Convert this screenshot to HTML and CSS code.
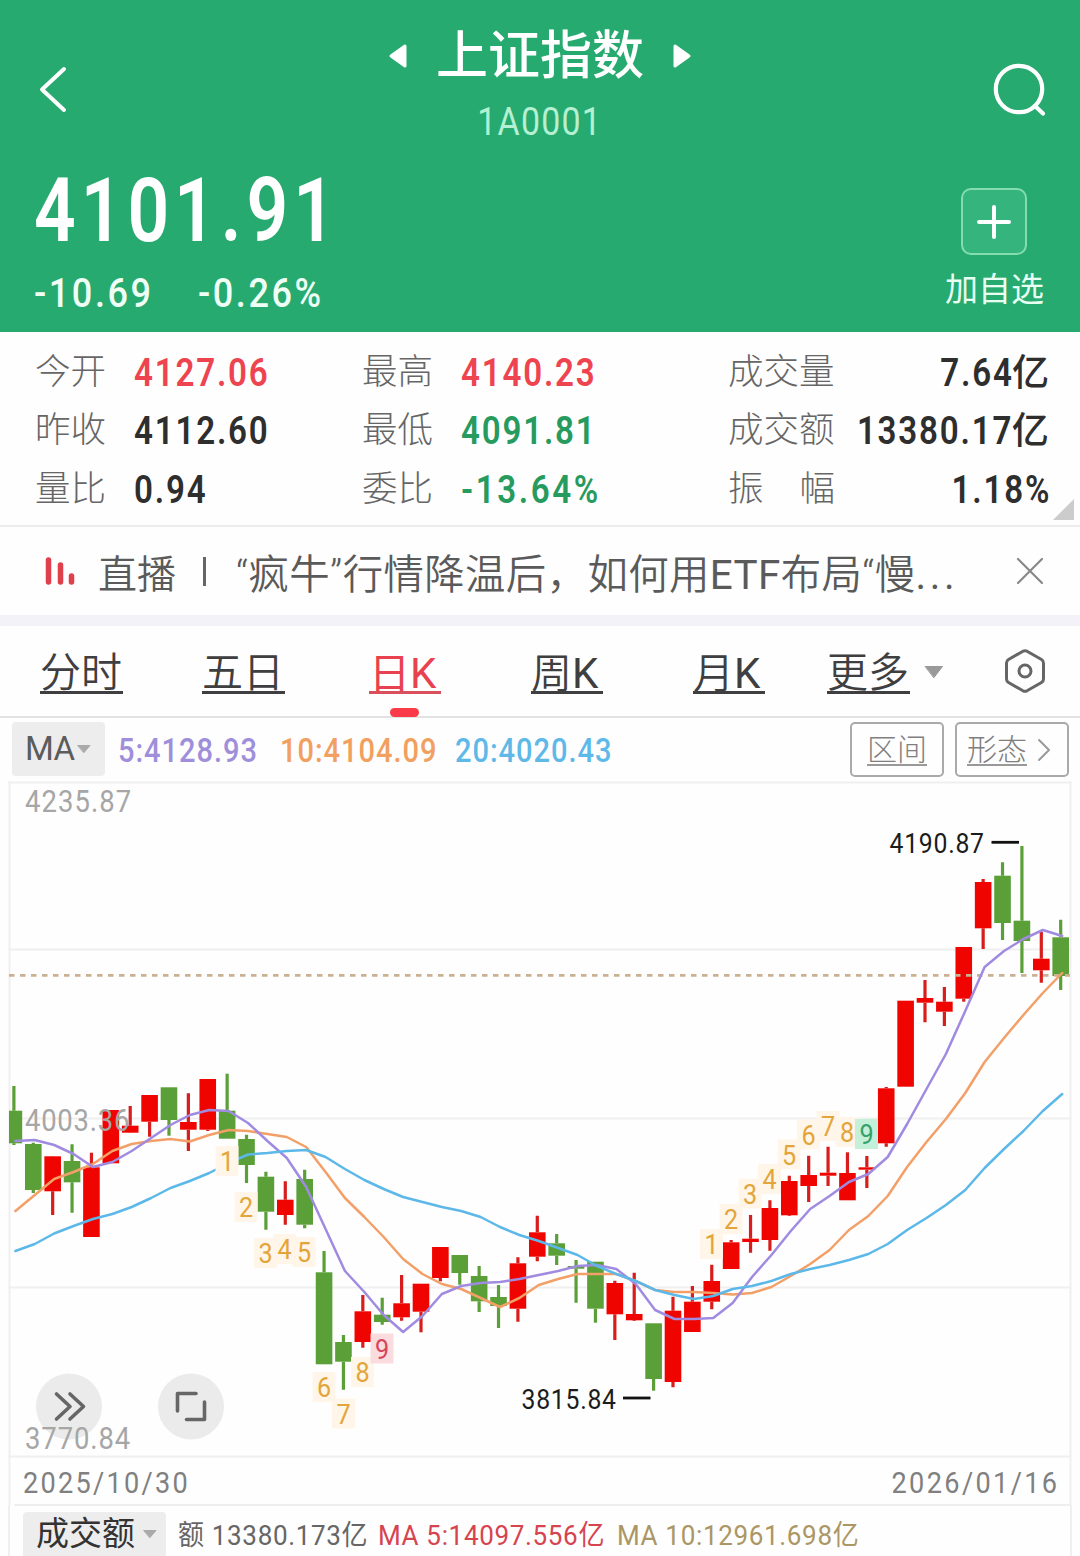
FILE: index.html
```html
<!DOCTYPE html>
<html lang="zh-CN">
<head>
    <meta charset="UTF-8">
    <meta name="viewport" content="width=device-width, initial-scale=1.0">
    <title>上证指数 1A0001</title>
    <link rel="stylesheet" href="styles.css">
</head>
<body>
    <header class="header">
        <div class="nav">
            <svg class="back" width="30" height="50" viewBox="0 0 30 50"><path d="M26 5L4 25.500L26 46"/></svg>
            <div class="title">
                <div class="name">
                    <svg width="18" height="24" viewBox="0 0 18 24"><path d="M2 12L16 2V22Z"/></svg>
                    <h1>上证指数</h1>
                    <svg width="18" height="24" viewBox="0 0 18 24"><path d="M16 12L2 2V22Z"/></svg>
                </div>
                <div class="code">1A0001</div>
            </div>
            <svg class="search" width="56" height="56" viewBox="0 0 56 56"><circle cx="27" cy="27" r="23.200"/><path d="M43 44L51 51.500"/></svg>
        </div>
        <div class="quote">
            <div>
                <div class="price">4101.91</div>
                <div class="change"><span>-10.69</span><span>-0.26%</span></div>
            </div>
            <div class="add">
                <div class="add-icon"><svg width="36" height="36" viewBox="0 0 36 36"><path d="M18 3V33M3 18H33"/></svg></div>
                <div class="add-text">加自选</div>
            </div>
        </div>
    </header>

    <section class="stats">
        <div class="label">今开</div><div class="value red">4127.06</div>
        <div class="label">最高</div><div class="value red">4140.23</div>
        <div class="label">成交量</div><div class="value last">7.64<b>亿</b></div>
        <div class="label">昨收</div><div class="value">4112.60</div>
        <div class="label">最低</div><div class="value green">4091.81</div>
        <div class="label">成交额</div><div class="value last">13380.17<b>亿</b></div>
        <div class="label">量比</div><div class="value">0.94</div>
        <div class="label">委比</div><div class="value green ratio">-13.64%</div>
        <div class="label spread"><span>振</span><span>幅</span></div><div class="value last percent">1.18%</div>
        <div class="corner"></div>
    </section>

    <section class="news">
        <svg class="live" width="30" height="28" viewBox="0 0 30 28"><path d="M3.500 3V25M15.500 8V25M26.500 19V25"/></svg>
        <span class="news-tag">直播</span>
        <i class="bar"></i>
        <p>“疯牛”行情降温后，如何用<span class="etf">ETF</span>布局“慢<span class="dots">...</span></p>
        <svg class="close" width="28" height="28" viewBox="0 0 28 28"><path d="M2 2L26 26M26 2L2 26"/></svg>
    </section>

    <nav class="tabs">
        <a class="tab">分时</a>
        <a class="tab">五日</a>
        <a class="tab active">日<span>K</span></a>
        <a class="tab">周<span>K</span></a>
        <a class="tab">月<span>K</span></a>
        <a class="tab">更多</a>
        <svg class="more" width="20" height="14" viewBox="0 0 20 14"><path d="M1.500 1.500H18.500L10 12.500Z"/></svg>
        <svg class="setting" width="44" height="46" viewBox="0 0 44 46"><path d="M20 3.200Q22 2.200 24 3.200L38.500 11.500Q40.500 12.700 40.500 15V31Q40.500 33.300 38.500 34.500L24 42.800Q22 43.800 20 42.800L5.500 34.500Q3.500 33.300 3.500 31V15Q3.500 12.700 5.500 11.500Z"/><circle cx="22" cy="23" r="6"/></svg>
    </nav>

    <section class="ma">
        <div class="ma-select">MA<svg width="14" height="8" viewBox="0 0 14 8"><path d="M1 .5H13L7 7.500Z"/></svg></div>
        <div class="ma-item ma5"><span>5:4128.93</span></div>
        <div class="ma-item ma10"><span>10:4104.09</span></div>
        <div class="ma-item ma20"><span>20:4020.43</span></div>
        <div class="btn range"><u>区间</u></div>
        <div class="btn shape"><u>形态</u><svg width="14" height="24" viewBox="0 0 14 24"><path d="M2 2L12 12L2 22"/></svg></div>
    </section>

    <svg id="chart" width="1080" height="725" viewBox="0 781 1080 725">
        <g class="grid">
            <path d="M9 782.500H1070.500M9 949.500H1070.500M9 1118.500H1070.500M9 1287.500H1070.500M9 1456.500H1070.500M15 1505H1070.500"/>
            <path d="M9.500 782V1506M1070.500 782V1506"/>
        </g>
        <g id="candles"></g>
        <path class="now" d="M9 975.300H1070"/>
        <g id="lines"></g>
        <g id="marks"></g>
        <g class="peak">
            <text transform="translate(889.500 853) scale(.9 1)" textLength="105">4190.87</text>
            <path d="M991.500 842.300H1019"/>
            <text transform="translate(521.500 1409) scale(.9 1)" textLength="105">3815.84</text>
            <path d="M623 1398H650.500"/>
        </g>
        <g class="tools">
            <circle cx="69" cy="1406.500" r="33"/>
            <path d="M56.500 1394L70 1406.500L56.500 1419M70 1394L83.500 1406.500L70 1419"/>
            <circle cx="191" cy="1406.500" r="33"/>
            <path d="M177.500 1411V1393.500H196M204.500 1402V1419.500H186.500"/>
        </g>
        <g class="axis">
            <text transform="translate(25 812) scale(.9 1)" textLength="118">4235.87</text>
            <text transform="translate(25 1130.500) scale(.9 1)" textLength="116">4003.36</text>
            <text transform="translate(25 1448.500) scale(.9 1)" textLength="117">3770.84</text>
        </g>
        <g class="dates">
            <text transform="translate(23 1493) scale(.92 1)" textLength="179">2025/10/30</text>
            <text transform="translate(891.500 1493) scale(.92 1)" textLength="180">2026/01/16</text>
        </g>
    </svg>

    <section class="volume">
        <div class="vol-select">成交额<svg width="14" height="8" viewBox="0 0 14 8"><path d="M1 .5H13L7 7.500Z"/></svg></div>
        <div class="vol-item v0"><span>额 13380.173亿</span></div>
        <div class="vol-item v5"><span>MA 5:14097.556亿</span></div>
        <div class="vol-item v10"><span>MA 10:12961.698亿</span></div>
    </section>

    <script>
        const X0 = 13.9, STEP = 19.385;
        // [up, high, body top, body bottom, low]
        const candles = [
            [0,1086,1110.7,1143.3,1145],[0,1142.7,1144,1190,1193],[1,1156,1156.3,1191.3,1215],
            [0,1144.3,1161,1182.3,1212.7],[1,1152.7,1167.3,1237,1237],[1,1110,1110,1163.3,1163.3],
            [1,1106,1125.7,1132.7,1133],[1,1095,1095,1121.7,1136.7],[0,1087.3,1087.3,1120,1135.7],
            [1,1093.3,1122,1129.7,1151],[1,1079,1079,1129.7,1131],[0,1073.7,1110.7,1138.7,1138.7],
            [0,1134.7,1139,1165,1183],[0,1171.7,1176.7,1211.7,1229.7],[1,1181.3,1199.7,1215,1224.7],
            [0,1169.7,1179,1224.7,1228.3],[0,1251,1272.3,1364.3,1364.3],[0,1335,1342,1361.7,1389.7],
            [1,1295,1311.3,1342,1347.7],[0,1297.7,1314.7,1322,1324.7],[1,1275,1303.3,1317.3,1320.7],
            [1,1283.7,1283.7,1311.7,1332.3],[1,1247,1247,1278,1281.3],[0,1255,1255,1273,1284.7],
            [0,1266,1276,1301.3,1312],[0,1285,1297,1306,1328],[1,1257.3,1263.3,1308.7,1321.7],
            [1,1215.7,1232.3,1256.7,1261.3],[0,1234,1243.3,1255.7,1265],[0,1260,1266,1268.7,1302.7],
            [0,1261.7,1261.7,1308.7,1322.7],[1,1280.7,1283,1314.3,1340],[1,1272.7,1314,1320.3,1321],
            [0,1323.3,1323.3,1379,1390.7],[1,1296.7,1310.7,1382,1387.3],[1,1286,1301.7,1332,1332],
            [1,1264.7,1281,1301.7,1309.3],[1,1240,1242.3,1269,1269],[1,1215,1238.7,1242,1252.7],
            [1,1200.3,1208,1240,1250.7],[1,1175.7,1181,1215.3,1216],[1,1155.7,1175,1186,1202],
            [1,1146.7,1172.7,1175.7,1186],[1,1152.3,1173,1200.3,1200.3],[1,1156,1167.3,1169.7,1188],
            [1,1087,1088.3,1143.3,1146.7],[1,1000.7,1000.7,1086.7,1086.7],[1,980,998,1002.7,1022.3],
            [1,987,1001.7,1011.7,1026],[1,947,947,998.7,1001.7],[1,879,882,928.3,949],
            [0,862.3,875.7,923,940],[0,846,920.7,941,973],[1,931.7,958.7,970.3,982.7],
            [0,919.7,937.3,976,990]
        ];
        const lines = {
            ma10: [1211,1195,1179,1172,1164,1151,1144,1141,1139,1141.5,1135,1130,1131,1134,1137,1147,1172,1198,1217,1237,1259,1274,1284,1289,1298,1307,1298,1285,1279,1274,1274,1274,1281,1290,1292,1292,1293,1294.5,1293,1287,1276,1264,1250,1230,1216,1196,1167,1142,1119,1093,1062,1038,1015,993,973],
            ma5: [1141,1140,1145,1154,1167,1162,1151,1138,1125,1115,1110,1111,1123,1141,1158,1187,1229,1271,1292,1315,1332,1316,1294,1286,1283,1282,1279,1275,1271,1266,1265,1269,1284,1310,1319,1319,1318,1303,1277,1255,1231,1209,1196,1182,1174,1157,1124,1089,1054,1011,967,951,939,930,936],
            ma20: [1251,1244,1233.5,1226,1219,1214,1207,1198,1188,1181,1173,1163,1154.5,1153,1151,1150,1157,1169,1180,1189,1197,1202,1207,1211,1217,1227,1235,1241,1248,1255,1266,1274,1281,1290,1295,1299,1296,1289,1286,1281,1274,1269,1265,1260,1254,1244,1230,1218,1205,1190,1168,1149,1131,1111,1094]
        };
        // [text, x, y, class]
        const marks = [
            [1,227,1161],[2,246,1207],[3,265.5,1253],[4,284.5,1249],[5,304,1252],[6,324,1387],[7,343.5,1413.5],[8,362.5,1372],[9,382,1348.5,'buy'],
            [1,711.5,1244],[2,731,1219],[3,750,1193.5],[4,769.5,1179],[5,789,1154.5],[6,808.5,1134.5],[7,828,1126],[8,847,1132],[9,866.5,1134,'sell']
        ];

        document.getElementById('candles').innerHTML = candles.map(([up, high, top, bottom, low], i) => {
            const x = X0 + STEP * i;
            const left = Math.max(x - 8.3, 9);
            return `<g class="${up ? 'up' : 'down'}">` +
                `<rect class="body" x="${left}" y="${top}" width="${x + 8.3 - left}" height="${bottom - top}"/>` +
                `<path d="M${x} ${high}V${top}M${x} ${bottom}V${low}"/></g>`;
        }).join('');

        document.getElementById('lines').innerHTML = Object.keys(lines).map(key =>
            `<polyline class="${key}-line" points="${lines[key].map((y, i) => (X0 + 1.5 + STEP * i) + ',' + y).join(' ')}"/>`
        ).join('');

        document.getElementById('marks').innerHTML = marks.map(([n, x, y, type]) =>
            `<g class="mark ${type || ''}"><rect x="${x - 11.5}" y="${y - 15}" width="23" height="30"/><text transform="translate(${x} ${y + 10}) scale(.9 1)">${n}</text></g>`
        ).join('');
    </script>
</body>
</html>
```
FILE: styles.css
```css
* { box-sizing: border-box; }
body {
    margin: 0;
    width: 1080px;
    height: 1556px;
    overflow: hidden;
    background: #fefefe;
    font-family: Roboto, "Noto Sans CJK SC", sans-serif;
    color: #2e2e2e;
}
svg { display: block; flex: none; fill: none; stroke-linecap: round; stroke-linejoin: round; }

/* header */
.header { height: 332px; background: #27aa6f; color: #fff; }
.nav { height: 164px; display: flex; justify-content: space-between; padding: 0 32px 0 38px; }
.back { margin-top: 64px; stroke: #fff; stroke-width: 4; }
.search { margin-top: 62px; stroke: #fff; stroke-width: 4.2; }
.title { display: flex; flex-direction: column; align-items: center; margin-left: 20px; }
.name { display: flex; align-items: center; gap: 29px; height: 74px; margin-top: 19px; }
.name svg { fill: #fff; stroke: #fff; stroke-width: 3; }
.name h1 { margin: 3px 0 1px; font-size: 52px; font-weight: 500; line-height: 74px; }
.code { font-size: 39px; line-height: 46px; margin-top: 6px; letter-spacing: 1.4px; color: #b4f0d1; transform: scaleX(.87); }
.quote { display: flex; justify-content: space-between; padding: 0 36px 0 34px; }
.price { width: 300px; font-size: 89px; font-weight: 600; line-height: 100px; letter-spacing: 6.1px; margin-top: -3px; transform: scaleX(.82); transform-origin: left; }
.change { display: flex; font-size: 41px; font-weight: 500; line-height: 48px; margin-top: 8px; letter-spacing: 2.9px; color: #effff6; }
.change span { width: 164px; transform: scaleX(.88); transform-origin: left; }
.add { display: flex; flex-direction: column; align-items: center; margin-top: 24px; }
.add-icon { width: 66px; height: 67px; display: flex; align-items: center; justify-content: center; margin-right: 2px; border: 2px solid #84dcb0; border-radius: 10px; background: #35b57d; }
.add-icon svg { stroke: #fff; stroke-width: 4; }
.add-text { font-size: 33px; line-height: 48px; margin-top: 11px; color: #e6fff2; }

/* quote numbers */
.stats {
    position: relative;
    height: 195px;
    padding: 11px 31px 0 35px;
    display: grid;
    grid-template-columns: 99px 228px 99px 267px 110px minmax(0, 1fr);
    grid-auto-rows: 58.3px;
    border-bottom: 2px solid #ececec;
}
.label { font-size: 35.5px; font-weight: 300; line-height: 58px; color: #666; }
.spread { display: flex; justify-content: space-between; width: 107px; }
.value { font-size: 39px; font-weight: 600; line-height: 61px; letter-spacing: 2.1px; white-space: nowrap; transform: scaleX(.85); transform-origin: left; }
.ratio { letter-spacing: 3px; }
.last { justify-self: end; transform-origin: right; }
.percent { margin-right: -2px; }
.value b { display: inline-block; margin-left: 5px; font-size: 37px; font-weight: 500; line-height: 40px; letter-spacing: 0; transform: scaleX(1.18); transform-origin: right; }
.red { color: #ee4450; }
.green { color: #279a5e; }
.corner { position: absolute; right: 6px; bottom: 5px; border-left: 21px solid transparent; border-bottom: 21px solid #ccc; }

/* news */
.news { height: 99px; display: flex; align-items: center; padding: 0 36px 11px 45px; font-size: 40.4px; font-weight: 350; color: #5a5a5a; box-shadow: inset 0 -11px #f2f2f8; }
.live { stroke: #e0404c; stroke-width: 5.5; }
.news-tag { margin-left: 23px; font-size: 39px; }
.bar { width: 3px; height: 29px; margin: 0 30px 0 27px; background: #666; }
.news p { margin: 0; flex: 1; white-space: nowrap; letter-spacing: .4px; }
.etf { font-weight: 400; }
.dots { font-weight: 400; letter-spacing: 3.5px; }
.close { stroke: #888; stroke-width: 2.2; }

/* period tabs */
.tabs { height: 92px; display: flex; align-items: flex-start; border-bottom: 2px solid #e2e2e2; padding: 22px 33px 0 40px; }
.tab { position: relative; height: 46px; width: 83px; margin-right: 79px; border-bottom: 3px solid #3f3f41; font-size: 41px; font-weight: 350; line-height: 51px; color: #3f3f41; white-space: nowrap; }
.tab:nth-child(n+3) { width: 72px; margin-right: 90px; }
.tab:nth-child(2) { margin-right: 84px; }
.tab:nth-child(5) { margin-right: 62px; }
.tab:nth-child(6) { width: 83px; margin-right: 14px; }
.tab span { font-size: 42px; font-weight: 400; }
.tab.active { color: #ea4150; border-color: #d9505c; font-weight: 400; }
.tab.active::after { content: ""; position: absolute; left: 21px; bottom: -26px; width: 29px; height: 9px; border-radius: 5px; background: #f93a48; }
.more { margin-top: 17px; fill: #999; stroke: #999; stroke-width: 1; }
.setting { margin-left: auto; stroke: #666; stroke-width: 3; }

/* moving averages */
.ma { height: 63px; display: flex; align-items: flex-start; padding: 4px 11px 0 12px; font-size: 33px; font-weight: 500; line-height: 58px; }
.ma-select { display: flex; align-items: center; gap: 3px; width: 93px; height: 54px; padding-left: 13px; margin-right: 13px; border-radius: 4px; background: #ededed; color: #5c5c5c; font-weight: 400; letter-spacing: -.6px; }
.ma-select svg, .vol-select svg { fill: #aaa; stroke: #aaa; }
.ma-item span, .vol-item span { display: inline-block; transform-origin: left; white-space: nowrap; }
.ma-item span { letter-spacing: 1.1px; transform: scaleX(.88); }
.ma5 { width: 162px; color: #9f8fdb; }
.ma10 { width: 175px; color: #f1a05f; }
.ma20 { width: 170px; color: #5fb9e8; }
.btn { height: 55px; display: flex; align-items: center; justify-content: center; border: 2px solid #aaa; border-radius: 5px; font-size: 30px; font-weight: 300; color: #808080; }
.btn u { height: 36px; margin-top: -3px; border-bottom: 2px solid #999; line-height: 40px; text-decoration: none; }
.range { width: 94px; margin-left: auto; }
.shape { width: 114px; margin-left: 11px; padding-right: 6px; gap: 10px; }
.btn svg { stroke: #999; stroke-width: 2; }

/* chart */
.grid { stroke: #efeff0; stroke-width: 2; }
.up .body { fill: #f00400; }
.up path { stroke: #d81d1d; stroke-width: 3.2; stroke-linecap: butt; }
.down .body { fill: #5a9f37; }
.down path { stroke: #5a9f37; stroke-width: 3.2; stroke-linecap: butt; }
.now { stroke: #cbb193; stroke-width: 2.8; stroke-dasharray: 5.5 5.5; stroke-linecap: butt; }
#lines { stroke-width: 2.5; }
.ma5-line { stroke: #a08be0; }
.ma10-line { stroke: #f2a068; }
.ma20-line { stroke: #5cb8e8; }
.mark { font-size: 28px; text-anchor: middle; }
.mark rect { fill: #fff5e8; }
.mark text { fill: #e3a53a; }
.mark.buy rect { fill: #fbdcde; }
.mark.buy text { fill: #d6455c; }
.mark.sell rect { fill: #c4efd9; }
.mark.sell text { fill: #35a26a; }
.peak text { font-size: 27.5px; fill: #1c1c1c; }
.peak path { stroke: #111; stroke-width: 2.8; stroke-linecap: butt; }
.tools circle { fill: #ebebeb; }
.tools path { stroke: #666; stroke-width: 3.6; }
.axis text { font-size: 30.5px; fill: #a6a6a6; }
.dates text { font-size: 29.5px; fill: #808080; }

/* volume */
.volume { margin: 0 8px; height: 50px; display: flex; align-items: flex-start; border: solid #efeff0; border-width: 0 2px; padding: 6px 0 0 13px; font-size: 28px; line-height: 48px; color: #666; }
.vol-select { display: flex; align-items: center; gap: 8px; width: 143px; height: 46px; padding: 0 0 3px 13px; margin-right: 12px; border-radius: 4px; background: #ededed; font-size: 33px; color: #333; }
.vol-item span { letter-spacing: .7px; transform: scaleX(.93); }
.v0 { width: 200px; }
.v5 { width: 239px; color: #d6444f; }
.v10 { width: 250px; color: #ab9664; }
```
